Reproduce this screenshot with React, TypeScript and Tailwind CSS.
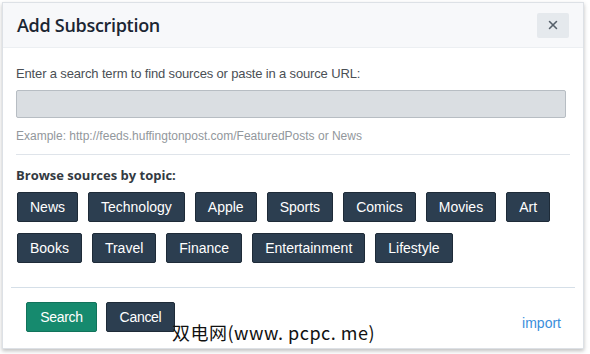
import { X } from "lucide-react";

const topics = [
  ["News", "Technology", "Apple", "Sports", "Comics", "Movies", "Art"],
  ["Books", "Travel", "Finance", "Entertainment", "Lifestyle"],
];

export default function App() {
  return (
    <div className="relative w-[590px] h-[354px] bg-white overflow-hidden font-['Liberation_Sans',Arial,sans-serif]">
      <div className="ml-[2px] mt-[2px] w-[582px] h-[347px] bg-white border border-[#dde1e6] shadow-[0_2px_4px_rgba(0,0,0,0.25)] flex flex-col">
        {/* Header */}
        <div className="h-[45px] shrink-0 bg-[#f7f8fa] border-b border-[#eceff2] flex items-center justify-between pl-[14px] pr-[14px]">
          <h2 className="text-[18px] font-semibold text-[#1b2633] font-['Open_Sans',sans-serif] tracking-[-0.3px]">
            Add Subscription
          </h2>
          <button className="w-[32px] h-[25px] rounded-[2px] bg-[#e5e9ed] flex items-center justify-center text-[#56606b]">
            <X size={14} strokeWidth={2.6} />
          </button>
        </div>

        {/* Body */}
        <div className="px-[13px] pt-[19px]">
          <p className="text-[13px] text-[#4a4f55] leading-[14px] tracking-[-0.15px]">
            Enter a search term to find sources or paste in a source URL:
          </p>
          <input
            className="mt-[9px] block w-[550px] h-[28px] bg-[#dadee2] border border-[#b7bdc3] rounded-[2px]"
            readOnly
          />
          <p className="mt-[11px] text-[12px] text-[#92979c] leading-[14px]">
            Example: http://feeds.huffingtonpost.com/FeaturedPosts or News
          </p>
          <div className="mt-[11px] w-[554px] border-t border-[#dfe4ea]" />
          <p className="mt-[12px] text-[13px] font-bold text-[#333a42] font-['Open_Sans',sans-serif] leading-[16px]">
            Browse sources by topic:
          </p>
          <div className="mt-[9px] pl-[1px] flex flex-col gap-[11px]">
            {topics.map((row, i) => (
              <div key={i} className="flex gap-[10px]">
                {row.map((t) => (
                  <button
                    key={t}
                    className="h-[30px] px-[12px] rounded-[2px] bg-[#2c3e50] border border-[#1e2b38] text-white text-[14px] leading-none"
                  >
                    {t}
                  </button>
                ))}
              </div>
            ))}
          </div>
        </div>

        {/* Footer */}
        <div className="mt-auto mx-[8px] border-t border-[#d5dfe8] h-[61px] flex items-start justify-between pl-[15px] pr-[14px] pt-[14px]">
          <div className="flex gap-[9px]">
            <button className="w-[71px] h-[30px] rounded-[2px] bg-[#168a6e] border border-[#11735b] text-white text-[14px] tracking-[-0.3px]">
              Search
            </button>
            <button className="w-[69px] h-[30px] rounded-[2px] bg-[#2c3e50] border border-[#1e2b38] text-white text-[14px] tracking-[-0.3px]">
              Cancel
            </button>
          </div>
          <a className="mt-[11px] text-[14px] text-[#3a8edb]">import</a>
        </div>
      </div>

      {/* watermark */}
      <span className="absolute left-[172px] top-[319px] text-[18px] text-[#111] font-['Noto_Sans_CJK_SC',sans-serif] leading-[26px] tracking-[0.5px]">
        双电网(www. pcpc. me)
      </span>
    </div>
  );
}
